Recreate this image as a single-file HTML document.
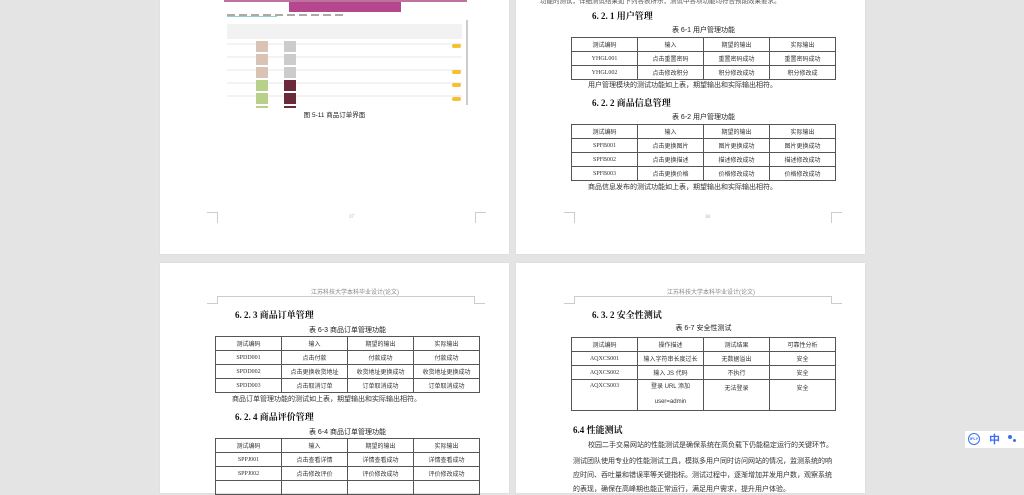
<!DOCTYPE html>
<html><head><meta charset="utf-8"><style>
*{margin:0;padding:0;box-sizing:border-box}
body{width:1024px;height:483px;background:#e4e4e4;position:relative;overflow:hidden;font-family:"Liberation Serif","Noto Serif CJK SC","Noto Sans CJK SC",serif;color:#222}
.pg{position:absolute;background:#fff;width:349px;box-shadow:0 0 1px #ccc}
.a{position:absolute;white-space:nowrap}
.h{font-weight:bold;font-size:9px;color:#111}
.cap{font-size:7px;text-align:center;font-family:"Liberation Sans","Noto Sans CJK SC",sans-serif}
.p{font-size:7px;font-family:"Liberation Sans","Noto Sans CJK SC",sans-serif;color:#333}
table{position:absolute;border-collapse:collapse;font-size:6px;font-family:"Liberation Sans","Noto Sans CJK SC",sans-serif;color:#333}
td{border:1px solid #555;text-align:center;height:14px;padding:0;width:66px}
td:first-child{font-family:"Liberation Serif",serif}
.hd{font-size:6px;color:#888;text-align:center;font-family:"Liberation Sans","Noto Sans CJK SC",sans-serif}
.c{position:absolute;border-color:#ccc;border-style:solid;width:11px;height:11px}
</style></head><body>

<!-- page 1 -->
<div class="pg" style="left:160px;top:-10px;height:264px">
 <div class="a" style="left:64px;top:10px;width:243px;height:108px;background:#fff">
  <div class="a" style="left:0;top:0;width:243px;height:2px;background:#c0729e"></div>
  <div class="a" style="left:65px;top:2px;width:112px;height:10px;background:#b5478f"></div>
  <div class="a" style="left:3px;top:16px;width:50px;height:1px;background:#9cd"></div>
  <div class="a" style="left:3px;top:14px;width:120px;height:2px;background:repeating-linear-gradient(90deg,#aaa 0 8px,#fff 8px 12px)"></div>
  <div class="a" style="left:3px;top:24px;width:235px;height:15px;background:#f2f2f2"></div>
  <div class="a" style="left:242px;top:20px;width:2px;height:85px;background:#ccc"></div>
  <div class="a" style="left:3px;top:40px;width:235px;height:68px;background:repeating-linear-gradient(180deg,#fff 0 3px,#f3f3f3 3px 5px,#fff 5px 13px)"></div>
  <div class="a" style="left:32px;top:41px;width:12px;height:67px;background:repeating-linear-gradient(180deg,#d9c3b5 0 11px,#fff 11px 13px)"></div>
  <div class="a" style="left:60px;top:41px;width:12px;height:67px;background:repeating-linear-gradient(180deg,#ccc 0 11px,#fff 11px 13px)"></div>
  <div class="a" style="left:60px;top:80px;width:12px;height:28px;background:repeating-linear-gradient(180deg,#6a2a3a 0 11px,#fff 11px 13px)"></div>
  <div class="a" style="left:32px;top:80px;width:12px;height:28px;background:repeating-linear-gradient(180deg,#b8d08a 0 11px,#fff 11px 13px)"></div>
  <div class="a" style="left:228px;top:44px;width:9px;height:4px;background:#f5c12e;border-radius:2px"></div>
  <div class="a" style="left:228px;top:70px;width:9px;height:4px;background:#f5c12e;border-radius:2px"></div>
  <div class="a" style="left:228px;top:83px;width:9px;height:4px;background:#f5c12e;border-radius:2px"></div>
  <div class="a" style="left:228px;top:97px;width:9px;height:4px;background:#f5c12e;border-radius:2px"></div>
 </div>
 <div class="a cap" style="left:0;width:349px;top:119px;font-size:6.5px">图 5-11 商品订单界面</div>
 <div class="c" style="left:47px;top:222px;border-width:1px 1px 0 0"></div>
 <div class="c" style="left:315px;top:222px;border-width:1px 0 0 1px"></div>
 <div class="a" style="left:189px;top:225px;font-size:5px;color:#aaa">37</div>
</div>

<!-- page 2 -->
<div class="pg" style="left:516px;top:-10px;height:264px">
 <div class="a p" style="left:24px;top:5px;font-size:6.5px;color:#555">功能的测试，详细测试结果如下列各表所示，测试中各项功能均符合预期效果要求。</div>
 <div class="a h" style="left:76px;top:19px">6. 2. 1 用户管理</div>
 <div class="a cap" style="left:0;width:375px;top:35px">表 6-1 用户管理功能</div>
 <table style="left:55px;top:47px"><tr><td>测试编码</td><td>输入</td><td>期望的输出</td><td>实际输出</td></tr><tr><td>YHGL001</td><td>点击重置密码</td><td>重置密码成功</td><td>重置密码成功</td></tr><tr><td>YHGL002</td><td>点击修改积分</td><td>积分修改成功</td><td>积分修改成</td></tr></table>
 <div class="a p" style="left:72px;top:90px">用户管理模块的测试功能如上表，期望输出和实际输出相符。</div>
 <div class="a h" style="left:76px;top:106px">6. 2. 2 商品信息管理</div>
 <div class="a cap" style="left:0;width:375px;top:122px">表 6-2 用户管理功能</div>
 <table style="left:55px;top:134px"><tr><td>测试编码</td><td>输入</td><td>期望的输出</td><td>实际输出</td></tr><tr><td>SPFB001</td><td>点击更换图片</td><td>图片更换成功</td><td>图片更换成功</td></tr><tr><td>SPFB002</td><td>点击更换描述</td><td>描述修改成功</td><td>描述修改成功</td></tr><tr><td>SPFB003</td><td>点击更换价格</td><td>价格修改成功</td><td>价格修改成功</td></tr></table>
 <div class="a p" style="left:72px;top:192px">商品信息发布的测试功能如上表，期望输出和实际输出相符。</div>
 <div class="c" style="left:48px;top:222px;border-width:1px 1px 0 0"></div>
 <div class="c" style="left:315px;top:222px;border-width:1px 0 0 1px"></div>
 <div class="a" style="left:189px;top:225px;font-size:5px;color:#aaa">38</div>
</div>

<!-- page 3 -->
<div class="pg" style="left:160px;top:263px;height:230px">
 <div class="a hd" style="left:0;width:390px;top:24px">江苏科技大学本科毕业设计(论文)</div>
 <div class="a" style="left:57px;top:33px;width:258px;height:8px;border:1px solid #ccc;border-bottom:0"></div>
 <div class="a" style="left:47px;top:40px;width:11px;height:1px;background:#ccc"></div>
 <div class="a" style="left:314px;top:40px;width:11px;height:1px;background:#ccc"></div>
 <div class="a h" style="left:75px;top:45px">6. 2. 3 商品订单管理</div>
 <div class="a cap" style="left:0;width:375px;top:62px">表 6-3 商品订单管理功能</div>
 <table style="left:55px;top:73px"><tr><td>测试编码</td><td>输入</td><td>期望的输出</td><td>实际输出</td></tr><tr><td>SPDD001</td><td>点击付款</td><td>付款成功</td><td>付款成功</td></tr><tr><td>SPDD002</td><td>点击更换收货地址</td><td>收货地址更换成功</td><td>收货地址更换成功</td></tr><tr><td>SPDD003</td><td>点击取消订单</td><td>订单取消成功</td><td>订单取消成功</td></tr></table>
 <div class="a p" style="left:72px;top:131px">商品订单管理功能的测试如上表，期望输出和实际输出相符。</div>
 <div class="a h" style="left:75px;top:147px">6. 2. 4 商品评价管理</div>
 <div class="a cap" style="left:0;width:375px;top:164px">表 6-4 商品订单管理功能</div>
 <table style="left:55px;top:175px"><tr><td>测试编码</td><td>输入</td><td>期望的输出</td><td>实际输出</td></tr><tr><td>SPPJ001</td><td>点击查看详情</td><td>详情查看成功</td><td>详情查看成功</td></tr><tr><td>SPPJ002</td><td>点击修改评价</td><td>评价修改成功</td><td>评价修改成功</td></tr><tr><td>&nbsp;</td><td></td><td></td><td></td></tr></table>
</div>

<!-- page 4 -->
<div class="pg" style="left:516px;top:263px;height:230px">
 <div class="a hd" style="left:0;width:390px;top:24px">江苏科技大学本科毕业设计(论文)</div>
 <div class="a" style="left:58px;top:33px;width:258px;height:8px;border:1px solid #ccc;border-bottom:0"></div>
 <div class="a" style="left:48px;top:40px;width:11px;height:1px;background:#ccc"></div>
 <div class="a" style="left:315px;top:40px;width:11px;height:1px;background:#ccc"></div>
 <div class="a h" style="left:76px;top:45px">6. 3. 2 安全性测试</div>
 <div class="a cap" style="left:0;width:375px;top:60px">表 6-7 安全性测试</div>
 <table style="left:55px;top:74px"><tr><td>测试编码</td><td>操作描述</td><td>测试结果</td><td>可靠性分析</td></tr><tr><td>AQXCS001</td><td>输入字符串长度过长</td><td>无数据溢出</td><td>安全</td></tr><tr><td>AQXCS002</td><td>输入 JS 代码</td><td>不执行</td><td>安全</td></tr><tr><td style="height:28px;vertical-align:top;padding-top:3px">AQXCS003</td><td style="height:28px;line-height:15px;padding-top:0">登录 URL 添加<br>user=admin</td><td style="vertical-align:top;padding-top:3px">无法登录</td><td style="vertical-align:top;padding-top:3px">安全</td></tr></table>
 <div class="a h" style="left:57px;top:160px">6.4 性能测试</div>
 <div class="a p" style="left:72px;top:177px">校园二手交易网站的性能测试是确保系统在高负载下仍能稳定运行的关键环节。</div>
 <div class="a p" style="left:57px;top:193px">测试团队使用专业的性能测试工具，模拟多用户同时访问网站的情况，监测系统的响</div>
 <div class="a p" style="left:57px;top:207px">应时间、吞吐量和错误率等关键指标。测试过程中，逐渐增加并发用户数，观察系统</div>
 <div class="a p" style="left:57px;top:221px">的表现，确保在高峰期也能正常运行，满足用户需求，提升用户体验。</div>
</div>

<!-- widget -->
<div class="a" style="left:965px;top:431px;width:59px;height:17px;background:#fff">
 <div class="a" style="left:3px;top:2px;width:12px;height:12px;border:1.5px solid #3d6ef5;border-radius:50%;font-size:4px;color:#3d6ef5;text-align:center;line-height:9px;font-family:'Liberation Sans',sans-serif;font-weight:bold">IFLY</div>
 <div class="a" style="left:24px;top:1px;font-size:11px;color:#3d6ef5;font-weight:bold;font-family:'Noto Sans CJK SC',sans-serif;line-height:14px">中</div>
 <div class="a" style="left:43px;top:4px;width:4px;height:4px;border-radius:50%;background:#3d6ef5"></div>
 <div class="a" style="left:48px;top:8px;width:3px;height:3px;border-radius:50%;background:#3d6ef5"></div>
</div>
</body></html>
